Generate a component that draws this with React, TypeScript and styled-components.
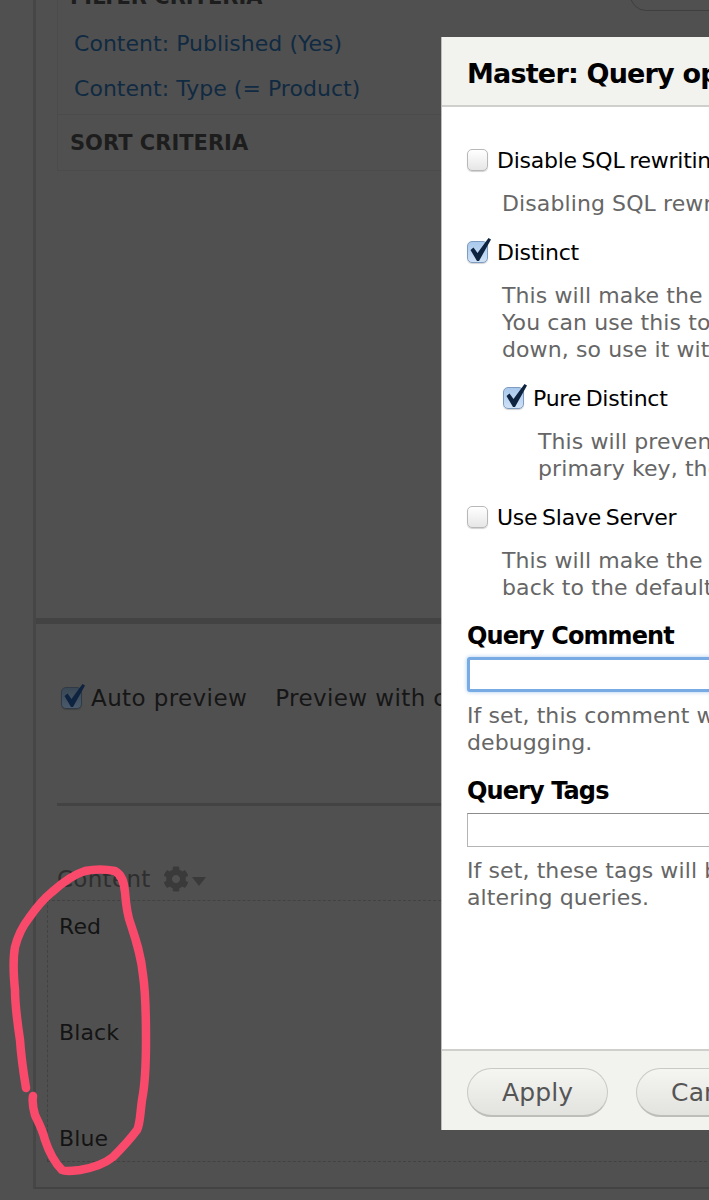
import React from "react";
import styled, { createGlobalStyle } from "styled-components";
import { FaCog } from "react-icons/fa";

const Global = createGlobalStyle`
  html, body { margin: 0; padding: 0; background: #505050; }
  body { font-family: "DejaVu Sans", "Liberation Sans", sans-serif; }
`;

const Page = styled.div`
  position: relative;
  width: 709px;
  height: 1200px;
  overflow: hidden;
  background: #505050;
`;

const Canvas = styled.div`
  margin-left: 33px;
  width: 720px;
  border-left: 3px solid #464646;
  height: 1187px;
  border-bottom: 2px solid #434343;
  display: flex;
  flex-direction: column;
`;

const TopArea = styled.div`
  height: 618px;
  padding: 0 0 0 21px;
  border-bottom: 6px solid #434343;
  flex: none;
`;

const CriteriaPanel = styled.div`
  margin-top: -28px;
  border: 1px solid #4b4b4b;
  width: 700px;
  height: 197px;
  display: flex;
  flex-direction: column;
`;

const CriteriaHeadRow = styled.div<{ $height: number }>`
  flex: none;
  height: ${(p) => p.$height}px;
  display: flex;
  align-items: center;
  justify-content: space-between;
  padding: 0 0 0 12px;
`;

const CriteriaHead = styled.div`
  font-size: 21px;
  font-weight: 700;
  color: #1d1d1d;
  line-height: 30px;
  letter-spacing: 0;
`;

const AddPill = styled.div`
  flex: none;
  align-self: flex-start;
  width: 120px;
  height: 36px;
  margin-right: 6px;
  border: 1px solid #3f3f3f;
  border-radius: 16px;
`;

const LinkList = styled.div`
  flex: none;
  height: 93px;
  padding: 0 0 0 16px;
  display: flex;
  flex-direction: column;
  border-bottom: 1px solid #4b4b4b;
`;

const CriteriaLink = styled.a`
  height: 45px;
  display: flex;
  align-items: center;
  font-size: 22px;
  letter-spacing: 0.03px;
  color: #102a42;
`;

const LowerArea = styled.div`
  flex: 1;
  min-height: 0;
  padding: 0 0 0 21px;
`;

const PreviewBar = styled.div`
  height: 182px;
  width: 680px;
  box-sizing: border-box;
  padding: 61px 0 0 4px;
  border-bottom: 3px solid #434343;
  display: flex;
  align-items: flex-start;
  gap: 28px;
  font-size: 23px;
  letter-spacing: 0.4px;
  color: #161616;
`;

const CheckRow = styled.label<{ $indent?: number }>`
  display: flex;
  align-items: center;
  gap: 9px;
  height: 26px;
  margin-left: ${(p) => p.$indent ?? 0}px;
  font-size: 22px;
  letter-spacing: -0.25px;
  word-spacing: -2px;
  white-space: nowrap;
`;

const PreviewCheck = styled(CheckRow)`
  font-size: 23px;
  letter-spacing: 0.4px;
  word-spacing: 0;
`;

const PlainLabel = styled.span`
  display: flex;
  align-items: center;
  height: 26px;
  white-space: nowrap;
`;

const Box = styled.span<{ $on?: boolean; $dim?: boolean }>`
  position: relative;
  flex: none;
  width: 21px;
  height: 22px;
  box-sizing: border-box;
  border-radius: 5px;
  border: 1px solid ${(p) => (p.$dim ? "#2f3a46" : p.$on ? "#7d9cc0" : "#b8b8b8")};
  background: ${(p) =>
    p.$dim
      ? "linear-gradient(#3a4754, #4a5a6b)"
      : p.$on
      ? "linear-gradient(#a9c8ec, #cfe1f6)"
      : "linear-gradient(#ffffff, #e6e6e6)"};
  box-shadow: 0 1px 1px rgba(0, 0, 0, 0.18);
`;

const Tick = styled.svg`
  position: absolute;
  left: 1px;
  top: -8px;
  width: 22px;
  height: 27px;
  overflow: visible;
`;

const ContentBlock = styled.div`
  margin-left: -10px;
  padding-top: 57px;
`;

const ContentTitle = styled.div`
  display: flex;
  align-items: center;
  height: 32px;
  padding-left: 10px;
  font-size: 23px;
  letter-spacing: 0.3px;
  color: #2e2e2e;
`;

const GearIcon = styled(FaCog)`
  width: 26px;
  height: 26px;
  margin-left: 12px;
  color: #3a3a3a;
`;

const Caret = styled.span`
  width: 0;
  height: 0;
  margin: 5px 0 0 3px;
  border-left: 7px solid transparent;
  border-right: 7px solid transparent;
  border-top: 9px solid #3a3a3a;
`;

const ResultsBox = styled.div`
  margin-top: 5px;
  width: 700px;
  height: 262px;
  box-sizing: border-box;
  border: 1px dashed #424242;
  display: flex;
  flex-direction: column;
  padding: 0 0 0 11px;
`;

const ResultRow = styled.div`
  height: 106px;
  flex: none;
  padding-top: 11px;
  box-sizing: border-box;
  font-size: 22px;
  line-height: 30px;
  letter-spacing: 0.1px;
  color: #141414;
`;

const Ring = styled.svg`
  position: absolute;
  left: 0;
  top: 0;
  width: 709px;
  height: 1200px;
  pointer-events: none;
`;

const Modal = styled.div`
  position: absolute;
  left: 441px;
  top: 37px;
  width: 560px;
  height: 1093px;
  display: flex;
  flex-direction: column;
  background: #fff;
  border-left: 1px solid #bdbdbd;
`;

const ModalHeader = styled.div`
  flex: none;
  height: 70px;
  box-sizing: border-box;
  padding: 5px 0 0 25px;
  display: flex;
  align-items: center;
  background: #f2f2ee;
  border-bottom: 2px solid #cfcfcc;
  font-size: 27px;
  font-weight: 700;
  letter-spacing: -0.8px;
  color: #000;
  white-space: nowrap;
`;

const ModalBody = styled.div`
  flex: 1;
  min-height: 0;
  padding: 40px 0 0 25px;
  color: #000;
`;

const Help = styled.div<{ $left?: number; $top?: number; $bottom?: number }>`
  margin: ${(p) => p.$top ?? 0}px 0 ${(p) => p.$bottom ?? 0}px ${(p) => p.$left ?? 0}px;
  font-size: 22px;
  line-height: 27px;
  letter-spacing: 0.1px;
  color: #666;
  white-space: nowrap;
`;

const FieldTitle = styled.div<{ $top: number }>`
  margin-top: ${(p) => p.$top}px;
  font-size: 24px;
  line-height: 30px;
  font-weight: 700;
  letter-spacing: -0.9px;
  color: #000;
  white-space: nowrap;
`;

const TextBox = styled.div<{ $focus?: boolean }>`
  box-sizing: border-box;
  width: 520px;
  height: ${(p) => (p.$focus ? 35 : 34)}px;
  margin-top: ${(p) => (p.$focus ? 6 : 7)}px;
  background: #fff;
  border: ${(p) => (p.$focus ? "3px solid #78aae4" : "1px solid #b4b4b4")};
  border-top-color: ${(p) => (p.$focus ? "#78aae4" : "#8c8c8c")};
  border-radius: ${(p) => (p.$focus ? "3px" : "0")};
  box-shadow: ${(p) => (p.$focus ? "0 0 4px #a6c8ee" : "none")};
`;

const ModalFooter = styled.div`
  flex: none;
  height: 81px;
  box-sizing: border-box;
  padding: 17px 0 0 25px;
  display: flex;
  gap: 28px;
  background: #f2f2ee;
  border-top: 2px solid #cfcfcc;
`;

const PillButton = styled.div`
  flex: none;
  height: 49px;
  padding: 0 34px;
  box-sizing: border-box;
  display: flex;
  align-items: center;
  border: 1px solid #c9c9c5;
  border-bottom: 2px solid #bdbdb9;
  border-radius: 25px;
  background: linear-gradient(#f5f5f2, #e2e2df);
  font-size: 25px;
  letter-spacing: 0.1px;
  color: #555;
`;

const Check = ({ on, dim }: { on?: boolean; dim?: boolean }) => (
  <Box $on={on} $dim={dim}>
    {on && (
      <Tick viewBox="0 0 22 27">
        <path d="M1.5 16 L4.5 13.5 L8.5 19 L19.5 4 L22 5.5 L10 27 L8 27 Z" fill="#0d2340" />
      </Tick>
    )}
  </Box>
);

const ringPath =
  "M26 1088 C23 1070 21 1055 20 1040 C17 1020 15 1005 15 990 C13 970 13 958 15 947 C18 935 22 927 29 918 C36 908 42 900 52 892 C62 883 72 875 85 871 C95 869 105 869 115 871 C122 875 124 882 125 892 C126 905 127 915 131 925 C136 940 141 955 143 975 C146 995 146 1015 146 1040 C146 1060 146 1080 142 1100 C140 1115 140 1125 137 1130 C128 1142 122 1148 113 1157 C103 1165 92 1168 80 1170 C72 1171 66 1172 62 1170 C54 1162 49 1152 45 1140 C42 1128 38 1122 35 1115 C33 1108 32 1102 33 1096";

export default function App() {
  return (
    <Page>
      <Global />
      <Canvas>
        <TopArea>
          <CriteriaPanel>
            <CriteriaHeadRow $height={48}>
              <CriteriaHead>FILTER CRITERIA</CriteriaHead>
              <AddPill />
            </CriteriaHeadRow>
            <LinkList>
              <CriteriaLink>Content: Published (Yes)</CriteriaLink>
              <CriteriaLink>Content: Type (= Product)</CriteriaLink>
            </LinkList>
            <CriteriaHeadRow $height={55}>
              <CriteriaHead>SORT CRITERIA</CriteriaHead>
            </CriteriaHeadRow>
          </CriteriaPanel>
        </TopArea>
        <LowerArea>
          <PreviewBar>
            <PreviewCheck>
              <Check on dim />
              Auto preview
            </PreviewCheck>
            <PlainLabel>Preview with contextual filters:</PlainLabel>
          </PreviewBar>
          <ContentBlock>
            <ContentTitle>
              Content
              <GearIcon />
              <Caret />
            </ContentTitle>
            <ResultsBox>
              <ResultRow>Red</ResultRow>
              <ResultRow>Black</ResultRow>
              <ResultRow>Blue</ResultRow>
            </ResultsBox>
          </ContentBlock>
        </LowerArea>
      </Canvas>
      <Ring viewBox="0 0 709 1200">
        <path d={ringPath} fill="none" stroke="#f94a6c" strokeWidth="8.5" strokeLinecap="round" strokeLinejoin="round" />
      </Ring>
      <Modal>
        <ModalHeader>Master: Query options</ModalHeader>
        <ModalBody>
          <CheckRow>
            <Check />
            Disable SQL rewriting
          </CheckRow>
          <Help $left={35} $top={17} $bottom={22}>
            Disabling SQL rewriting will disable checks
          </Help>
          <CheckRow>
            <Check on />
            Distinct
          </CheckRow>
          <Help $left={35} $top={17} $bottom={22}>
            This will make the view display
            <br />
            You can use this to try and remove
            <br />
            down, so use it with caution.
          </Help>
          <CheckRow $indent={36}>
            <Check on />
            Pure Distinct
          </CheckRow>
          <Help $left={71} $top={17} $bottom={22}>
            This will prevent duplicates
            <br />
            primary key, the query
          </Help>
          <CheckRow>
            <Check />
            Use Slave Server
          </CheckRow>
          <Help $left={35} $top={17}>
            This will make the query use
            <br />
            back to the default server
          </Help>
          <FieldTitle $top={20}>Query Comment</FieldTitle>
          <TextBox $focus />
          <Help $top={10}>
            If set, this comment will be embedded
            <br />
            debugging.
          </Help>
          <FieldTitle $top={20}>Query Tags</FieldTitle>
          <TextBox />
          <Help $top={10}>
            If set, these tags will be appended
            <br />
            altering queries.
          </Help>
        </ModalBody>
        <ModalFooter>
          <PillButton>Apply</PillButton>
          <PillButton>Cancel</PillButton>
        </ModalFooter>
      </Modal>
    </Page>
  );
}
